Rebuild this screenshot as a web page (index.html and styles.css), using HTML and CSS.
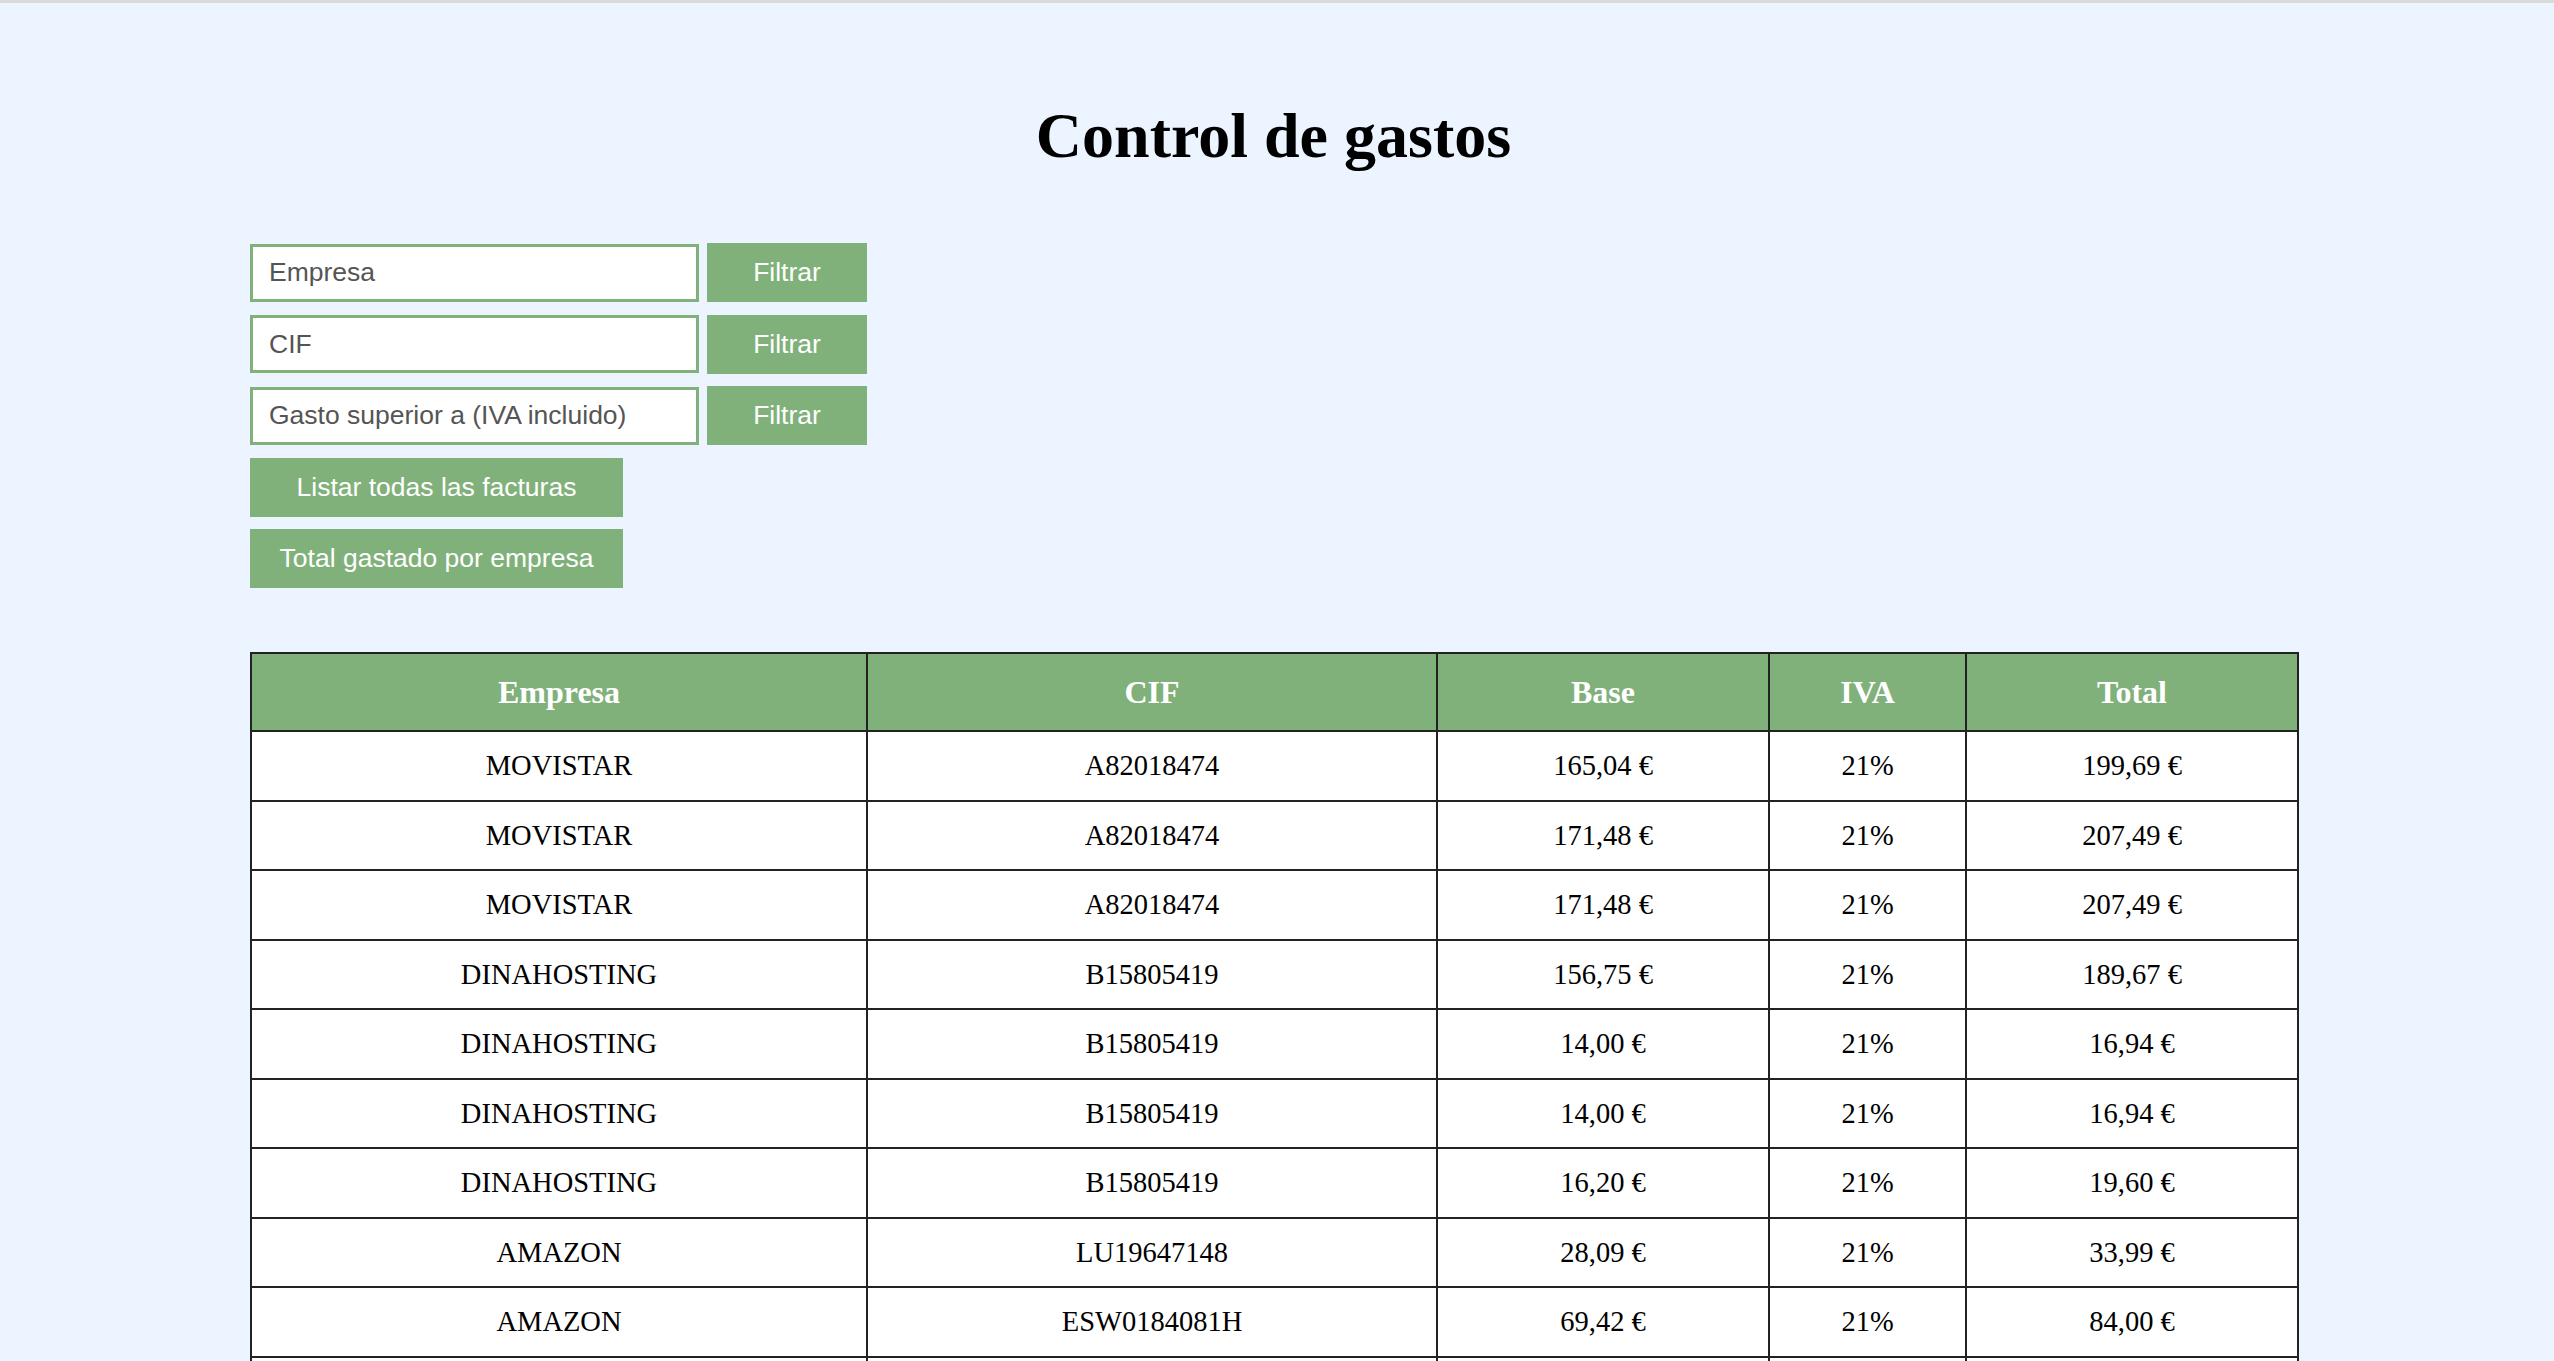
FILE: index.html
```html
<!DOCTYPE html>
<html lang="es">
<head>
<meta charset="utf-8">
<title>Control de gastos</title>
<link rel="stylesheet" href="styles.css">
</head>
<body>
<div class="page">
  <h1 class="title">Control de gastos</h1>
  <div class="filters">
    <div class="filter-row">
      <input class="field" type="text" placeholder="Empresa">
      <button class="btn btn-small">Filtrar</button>
    </div>
    <div class="filter-row">
      <input class="field" type="text" placeholder="CIF">
      <button class="btn btn-small">Filtrar</button>
    </div>
    <div class="filter-row">
      <input class="field" type="text" placeholder="Gasto superior a (IVA incluido)">
      <button class="btn btn-small">Filtrar</button>
    </div>
    <button class="btn btn-wide">Listar todas las facturas</button>
    <button class="btn btn-wide">Total gastado por empresa</button>
  </div>
  <table class="invoices">
    <colgroup>
      <col class="c-empresa"><col class="c-cif"><col class="c-base"><col class="c-iva"><col class="c-total">
    </colgroup>
    <thead>
      <tr><th>Empresa</th><th>CIF</th><th>Base</th><th>IVA</th><th>Total</th></tr>
    </thead>
    <tbody>
      <tr><td>MOVISTAR</td><td>A82018474</td><td>165,04 €</td><td>21%</td><td>199,69 €</td></tr>
      <tr><td>MOVISTAR</td><td>A82018474</td><td>171,48 €</td><td>21%</td><td>207,49 €</td></tr>
      <tr><td>MOVISTAR</td><td>A82018474</td><td>171,48 €</td><td>21%</td><td>207,49 €</td></tr>
      <tr><td>DINAHOSTING</td><td>B15805419</td><td>156,75 €</td><td>21%</td><td>189,67 €</td></tr>
      <tr><td>DINAHOSTING</td><td>B15805419</td><td>14,00 €</td><td>21%</td><td>16,94 €</td></tr>
      <tr><td>DINAHOSTING</td><td>B15805419</td><td>14,00 €</td><td>21%</td><td>16,94 €</td></tr>
      <tr><td>DINAHOSTING</td><td>B15805419</td><td>16,20 €</td><td>21%</td><td>19,60 €</td></tr>
      <tr><td>AMAZON</td><td>LU19647148</td><td>28,09 €</td><td>21%</td><td>33,99 €</td></tr>
      <tr><td>AMAZON</td><td>ESW0184081H</td><td>69,42 €</td><td>21%</td><td>84,00 €</td></tr>
      <tr><td>AMAZON</td><td>ESW0184081H</td><td>69,42 €</td><td>21%</td><td>84,00 €</td></tr>
    </tbody>
  </table>
</div>
</body>
</html>
```
FILE: styles.css
```css
html, body {
  margin: 0;
  padding: 0;
}
body {
  background: #ecf4ff;
  border-top: 3px solid #dadada;
  font-family: "Liberation Serif", "Times New Roman", serif;
  color: #000;
}
.page {
  width: 2047px;
  margin-left: 250px;
}
.title {
  margin: 0;
  padding-top: 113px;
  height: 240px;
  box-sizing: border-box;
  text-align: center;
  font-size: 64px;
  line-height: 40px;
  font-weight: bold;
}
.filters {
  display: flex;
  flex-direction: column;
  align-items: flex-start;
  gap: 12.6px;
}
.filter-row {
  display: flex;
  gap: 8px;
  align-items: center;
}
.field {
  width: 449px;
  height: 58px;
  box-sizing: border-box;
  border: 3px solid #81b17b;
  background: #fff;
  padding: 0 15px 0 16px;
  margin: 0;
  font-family: "Liberation Sans", Arial, sans-serif;
  font-size: 26.5px;
  color: #555;
  outline: none;
}
.field::placeholder {
  color: #555;
  opacity: 1;
}
.btn {
  height: 59px;
  box-sizing: border-box;
  border: none;
  margin: 0;
  padding: 0;
  background: #81b17b;
  color: #fff;
  font-family: "Liberation Sans", Arial, sans-serif;
  font-size: 26.5px;
  text-align: center;
}
.btn-small {
  width: 160px;
}
.btn-wide {
  width: 373px;
}
.invoices {
  margin-top: 64px;
  width: 2047px;
  border-collapse: collapse;
  table-layout: fixed;
  background: #fff;
}
.c-empresa { width: 616px; }
.c-cif { width: 570px; }
.c-base { width: 332px; }
.c-iva { width: 197px; }
.c-total { width: 332px; }
.invoices th,
.invoices td {
  border: 2px solid #222;
  text-align: center;
  padding: 0;
}
.invoices th {
  background: #81b17b;
  color: #fff;
  font-weight: bold;
  font-size: 32px;
  height: 76px;
  line-height: 36px;
}
.invoices td {
  font-size: 28.5px;
  height: 67.5px;
  line-height: 34px;
}
```
